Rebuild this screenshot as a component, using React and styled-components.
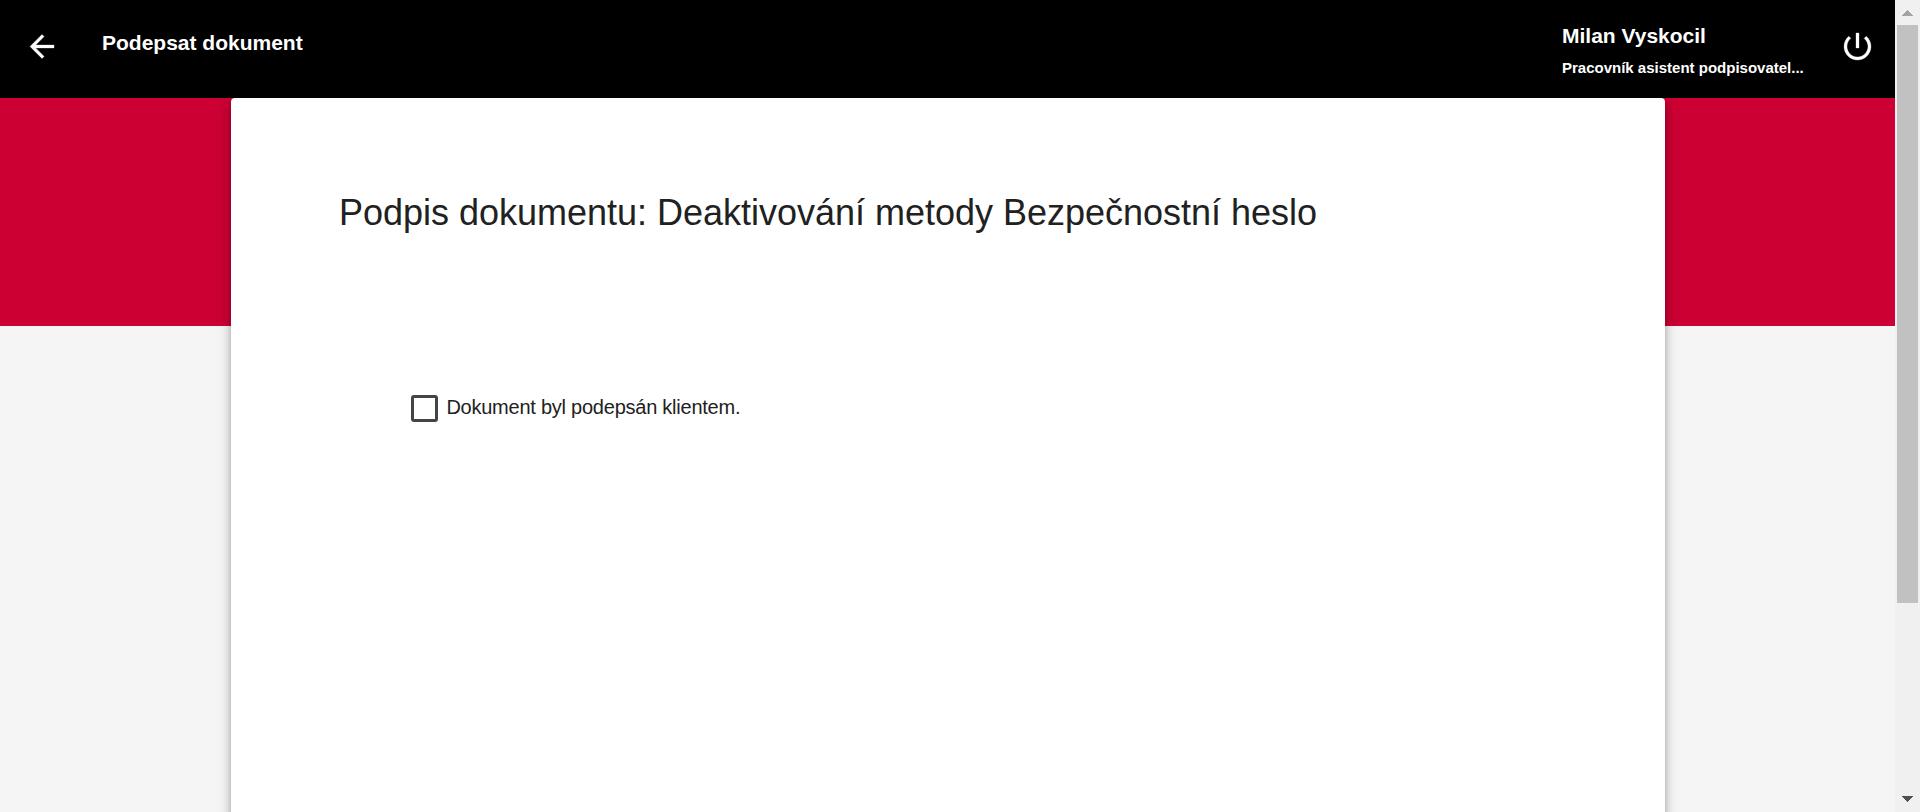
import React from "react";
import styled, { createGlobalStyle } from "styled-components";

const GlobalStyle = createGlobalStyle`
  *, *::before, *::after { box-sizing: border-box; }
  html, body { margin: 0; height: 100%; overflow: hidden; }
  body { font-family: "Liberation Sans", Arial, sans-serif; color: #212121; }
  h1, h2, p { margin: 0; }
`;

const Shell = styled.div`
  display: flex;
  height: 812px;
  background: #f5f5f5;
`;

const Page = styled.div`
  flex: 1;
  min-width: 0;
  display: flex;
  flex-direction: column;
`;

const Header = styled.header`
  flex: none;
  height: 98px;
  display: flex;
  align-items: flex-start;
  background: #000;
  color: #fff;
`;

const IconButton = styled.button`
  display: block;
  padding: 0;
  border: 0;
  background: none;
  color: inherit;
  margin: ${(p) => p.$margin};
  svg { display: block; stroke: currentColor; stroke-width: 0.2; }
`;

const HeaderTitle = styled.h2`
  margin: 31px auto 0 0;
  font-size: 21px;
  line-height: 24px;
  font-weight: 700;
`;

const User = styled.div`
  width: 251px;
  margin-top: 24px;
  font-weight: 700;
`;

const UserName = styled.p`
  font-size: 21px;
  line-height: 24px;
`;

const UserRole = styled.p`
  margin-top: 11px;
  font-size: 15px;
  line-height: 18px;
  white-space: nowrap;
`;

const Content = styled.main`
  flex: 1;
  min-height: 0;
  overflow: hidden;
  display: flex;
  padding: 0 230px 0 231px;
  background: linear-gradient(#cc0033 228px, #f5f5f5 228px);
`;

const Card = styled.section`
  flex: 1;
  height: 900px;
  padding: 94px 108px 0;
  border-radius: 4px;
  background: #fff;
  box-shadow: 0 4px 5px -1px rgba(0, 0, 0, 0.2), 0 7px 10px 1px rgba(0, 0, 0, 0.14),
    0 2px 16px 1px rgba(0, 0, 0, 0.12);
`;

const Heading = styled.h1`
  font-size: 36px;
  line-height: 42px;
  font-weight: 400;
  letter-spacing: -0.01px;
  white-space: nowrap;
`;

const CheckRow = styled.label`
  display: flex;
  align-items: flex-start;
  margin: 161px 0 0 72px;
`;

const CheckBox = styled.span`
  width: 27px;
  height: 27px;
  border: 3px solid #444;
  border-radius: 3px;
`;

const CheckText = styled.span`
  margin-left: 8.4px;
  font-size: 20px;
  line-height: 24px;
  letter-spacing: -0.24px;
`;

const Scrollbar = styled.div`
  flex: none;
  width: 25px;
  display: flex;
  flex-direction: column;
  align-items: center;
  background: #f0f0f0;
`;

const ScrollArrow = styled.svg`
  display: block;
  flex: none;
  width: 25px;
  height: 25px;
`;

const ScrollThumb = styled.div`
  width: 21px;
  height: 578px;
  margin-bottom: auto;
  background: #c1c1c1;
`;

export default function App() {
  return (
    <>
      <GlobalStyle />
      <Shell>
        <Page>
          <Header>
            <IconButton $margin="28px 42px 0 24px" aria-label="Zpět">
              <svg width="36" height="36" viewBox="0 -0.33 24 24" fill="currentColor">
                <path d="M20 11H7.83l5.59-5.59L12 4l-8 8 8 8 1.41-1.41L7.83 13H20v-2z" />
              </svg>
            </IconButton>
            <HeaderTitle>Podepsat dokument</HeaderTitle>
            <User>
              <UserName>Milan Vyskocil</UserName>
              <UserRole>Pracovník asistent podpisovatel...</UserRole>
            </User>
            <IconButton $margin="28px 20px 0 26px" aria-label="Odhlásit">
              <svg width="36" height="36" viewBox="-0.33 -0.33 24 24" fill="currentColor">
                <path d="M13 3h-2v10h2V3zm4.83 2.17l-1.42 1.42C17.99 7.86 19 9.81 19 12c0 3.87-3.13 7-7 7s-7-3.13-7-7c0-2.19 1.01-4.14 2.58-5.42L6.17 5.17C4.23 6.82 3 9.26 3 12c0 4.97 4.03 9 9 9s9-4.03 9-9c0-2.74-1.23-5.18-3.17-6.83z" />
              </svg>
            </IconButton>
          </Header>
          <Content>
            <Card>
              <Heading>Podpis dokumentu: Deaktivování metody Bezpečnostní heslo</Heading>
              <CheckRow>
                <CheckBox role="checkbox" aria-checked="false" />
                <CheckText>Dokument byl podepsán klientem.</CheckText>
              </CheckRow>
            </Card>
          </Content>
        </Page>
        <Scrollbar>
          <ScrollArrow viewBox="0 0 25 25" shapeRendering="crispEdges">
            <path d="M7 16h11L12.5 10z" fill="#a3a3a3" />
          </ScrollArrow>
          <ScrollThumb />
          <ScrollArrow viewBox="0 0 25 25" shapeRendering="crispEdges">
            <path d="M7 9h11L12.5 15z" fill="#505050" />
          </ScrollArrow>
        </Scrollbar>
      </Shell>
    </>
  );
}
